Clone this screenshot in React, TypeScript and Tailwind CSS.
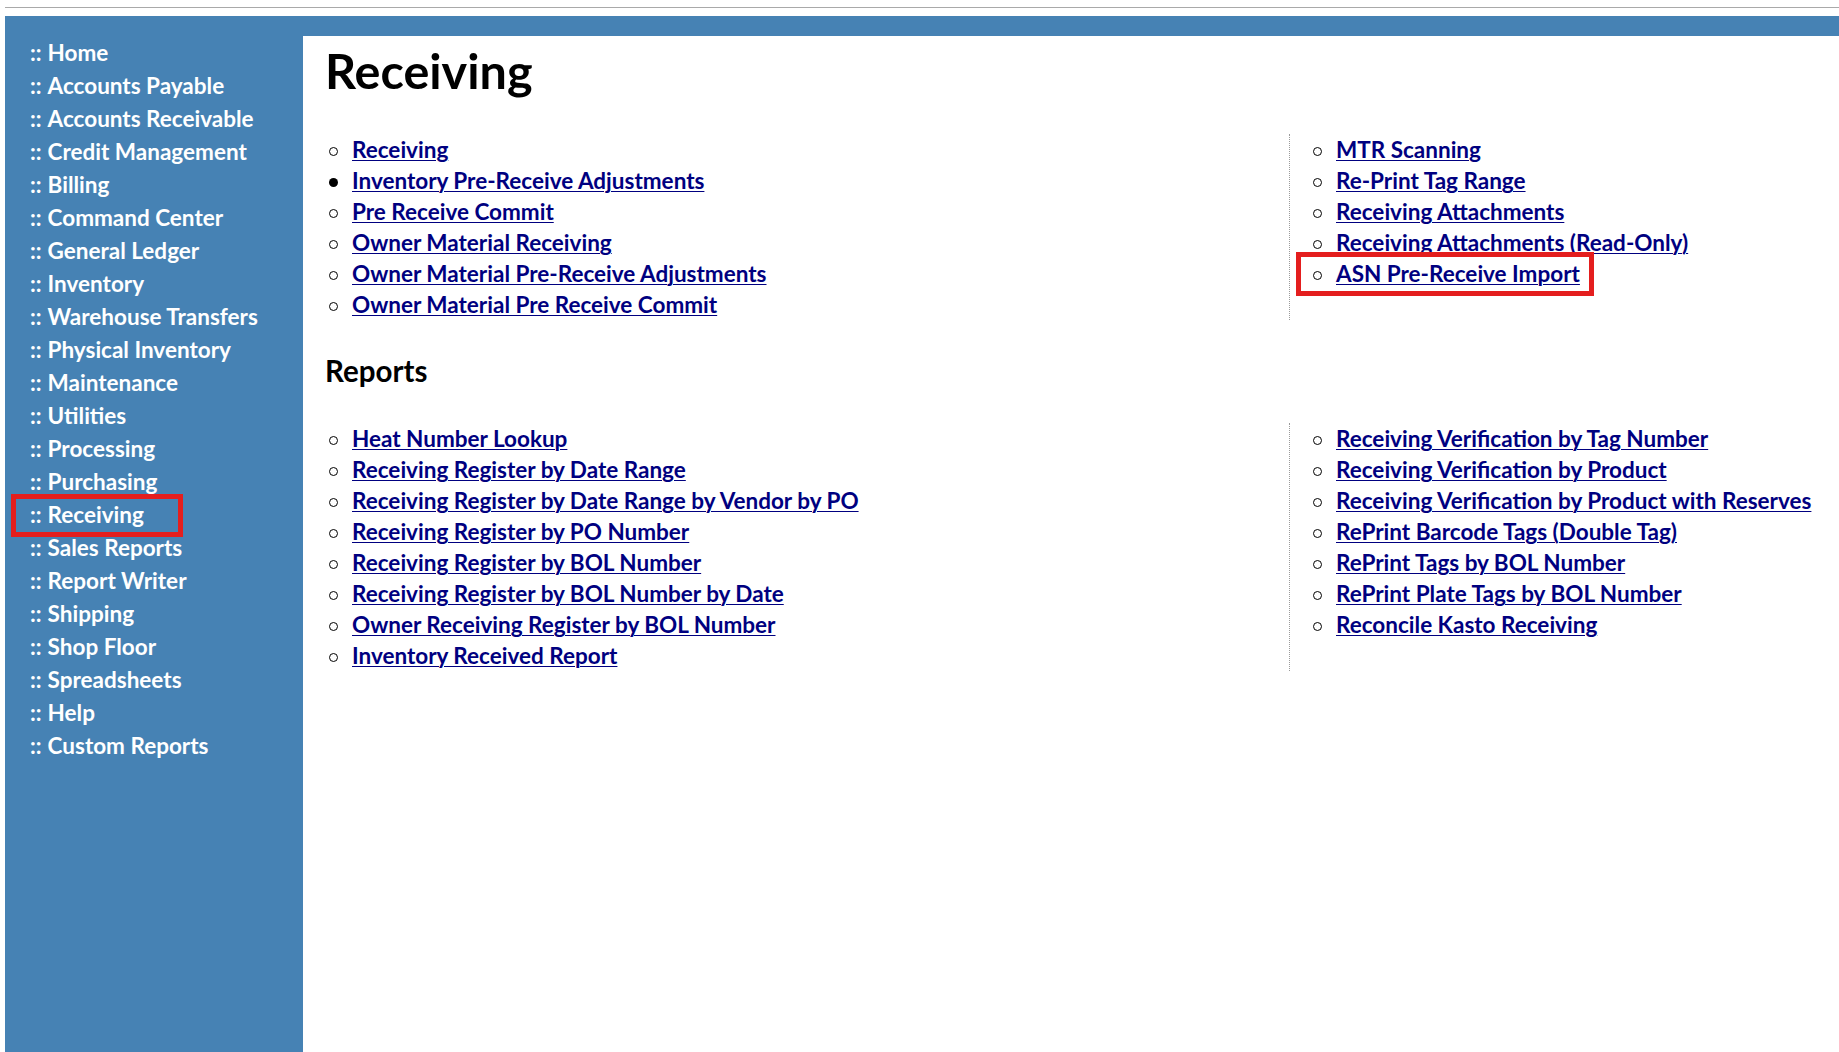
import React from "react";

const sideItems = [
  "Home",
  "Accounts Payable",
  "Accounts Receivable",
  "Credit Management",
  "Billing",
  "Command Center",
  "General Ledger",
  "Inventory",
  "Warehouse Transfers",
  "Physical Inventory",
  "Maintenance",
  "Utilities",
  "Processing",
  "Purchasing",
  "Receiving",
  "Sales Reports",
  "Report Writer",
  "Shipping",
  "Shop Floor",
  "Spreadsheets",
  "Help",
  "Custom Reports",
];

const topLeft = [
  "Receiving",
  "Inventory Pre-Receive Adjustments",
  "Pre Receive Commit",
  "Owner Material Receiving",
  "Owner Material Pre-Receive Adjustments",
  "Owner Material Pre Receive Commit",
];

const topRight = [
  "MTR Scanning",
  "Re-Print Tag Range",
  "Receiving Attachments",
  "Receiving Attachments (Read-Only)",
  "ASN Pre-Receive Import",
];

const repLeft = [
  "Heat Number Lookup",
  "Receiving Register by Date Range",
  "Receiving Register by Date Range by Vendor by PO",
  "Receiving Register by PO Number",
  "Receiving Register by BOL Number",
  "Receiving Register by BOL Number by Date",
  "Owner Receiving Register by BOL Number",
  "Inventory Received Report",
];

const repRight = [
  "Receiving Verification by Tag Number",
  "Receiving Verification by Product",
  "Receiving Verification by Product with Reserves",
  "RePrint Barcode Tags (Double Tag)",
  "RePrint Tags by BOL Number",
  "RePrint Plate Tags by BOL Number",
  "Reconcile Kasto Receiving",
];

function Row({ text, filled, boxed }: { text: string; filled?: boolean; boxed?: boolean }) {
  return (
    <div className="relative flex h-[31px] items-center">
      {boxed && (
        <span className="pointer-events-none absolute left-[-17px] top-[-6px] h-[44px] w-[298px] border-[5px] border-[#e41e1e]" />
      )}
      <span
        className={
          filled
            ? "mr-[14px] inline-block h-[9px] w-[9px] shrink-0 translate-y-[2px] rounded-full bg-black"
            : "mr-[14px] inline-block h-[9px] w-[9px] shrink-0 translate-y-[2px] rounded-full border border-black"
        }
      />
      <a
        href="#"
        className="whitespace-nowrap text-[22.5px] font-bold text-[#000080] underline decoration-1 underline-offset-[2px]"
      >
        {text}
      </a>
    </div>
  );
}

export default function App() {
  return (
    <div
      className="flex h-screen min-h-[1052px] w-full flex-col overflow-hidden bg-white"
      style={{ fontFamily: "Lato, 'Open Sans', sans-serif" }}
    >
      <div className="ml-[5px] mt-[7px] h-px bg-[#a9a9a9]" />
      <div className="ml-[5px] mt-[8px] flex flex-1 bg-[#4682b4]">
        {/* Sidebar */}
        <nav className="w-[298px] shrink-0 pt-[20px]">
          {sideItems.map((item) => (
            <div
              key={item}
              className="relative h-[33px] whitespace-nowrap pl-[25px] text-[22.5px] font-bold leading-[33px] text-white"
            >
              {item === "Receiving" && (
                <span className="pointer-events-none absolute left-[6px] top-[-4px] h-[43px] w-[172px] border-[5px] border-[#e41e1e]" />
              )}
              <span className="mr-[6px]">::</span>
              {item}
            </div>
          ))}
        </nav>

        {/* Content */}
        <main className="mt-[20px] flex-1 bg-white pt-[8px] text-black">
          <h1 className="h-[52px] pl-[22px] text-[48.5px] font-bold leading-[52px]">Receiving</h1>

          <div className="mt-[38px] grid grid-cols-[986px_1fr]">
            <div className="pl-[26px]">
              {topLeft.map((t, i) => (
                <Row key={t} text={t} filled={i === 1} />
              ))}
            </div>
            <div className="border-l border-dotted border-[#9a9a9a] pl-[23px]">
              {topRight.map((t) => (
                <Row key={t} text={t} boxed={t === "ASN Pre-Receive Import"} />
              ))}
            </div>
          </div>

          <h2 className="mt-[35px] h-[32px] pl-[22px] text-[29.5px] font-bold leading-[32px]">Reports</h2>

          <div className="mt-[36px] grid grid-cols-[986px_1fr]">
            <div className="pl-[26px]">
              {repLeft.map((t) => (
                <Row key={t} text={t} />
              ))}
            </div>
            <div className="border-l border-dotted border-[#9a9a9a] pl-[23px]">
              {repRight.map((t) => (
                <Row key={t} text={t} />
              ))}
            </div>
          </div>
        </main>
      </div>
    </div>
  );
}
